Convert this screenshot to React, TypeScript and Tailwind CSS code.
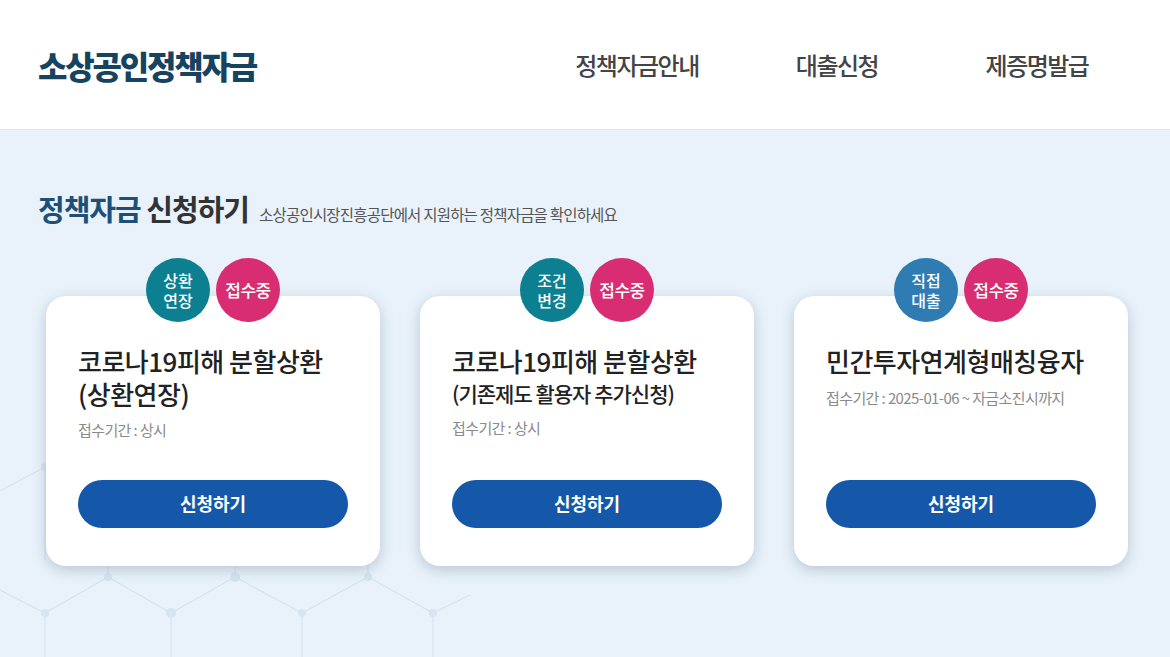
import React from "react";

const font = { fontFamily: '"Noto Sans CJK KR", "Noto Sans", sans-serif' };

type Fund = {
  tag: string[];
  tagColor: string;
  title: string;
  sub?: string;
  subSmall?: boolean;
  period: string;
};

const funds: Fund[] = [
  {
    tag: ["상환", "연장"],
    tagColor: "bg-[#0c7f90]",
    title: "코로나19피해 분할상환",
    sub: "(상환연장)",
    period: "접수기간 : 상시",
  },
  {
    tag: ["조건", "변경"],
    tagColor: "bg-[#0c7f90]",
    title: "코로나19피해 분할상환",
    sub: "(기존제도 활용자 추가신청)",
    subSmall: true,
    period: "접수기간 : 상시",
  },
  {
    tag: ["직접", "대출"],
    tagColor: "bg-[#2f7cb3]",
    title: "민간투자연계형매칭융자",
    period: "접수기간 : 2025-01-06 ~ 자금소진시까지",
  },
];

const HexBackground = () => (
  <svg
    className="pointer-events-none absolute inset-0 h-full w-full"
    viewBox="0 0 1170 527"
    preserveAspectRatio="xMinYMin slice"
  >
    <g stroke="#d6e3ee" strokeWidth="1.2" fill="none">
      <polyline points="0,361 45,337 45,430" />
      <polyline points="0,460 45,483 108,447 171,483 235,447 302,483 368,447 433,483 470,465" />
      <line x1="45" y1="483" x2="45" y2="527" />
      <line x1="171" y1="483" x2="171" y2="527" />
      <line x1="302" y1="483" x2="302" y2="527" />
      <line x1="433" y1="483" x2="433" y2="527" />
      <line x1="108" y1="447" x2="108" y2="420" />
      <line x1="235" y1="447" x2="235" y2="420" />
      <line x1="368" y1="447" x2="368" y2="420" />
    </g>
    <g fill="#d6e5ef">
      <circle cx="45" cy="337" r="4" />
      <circle cx="108" cy="447" r="4" />
      <circle cx="235" cy="447" r="5" />
      <circle cx="368" cy="447" r="4" />
      <circle cx="45" cy="483" r="4" />
      <circle cx="171" cy="483" r="5" />
      <circle cx="302" cy="483" r="4" />
      <circle cx="433" cy="483" r="4" />
    </g>
  </svg>
);

const FundCard = ({ fund }: { fund: Fund }) => (
  <div className="relative flex h-[270px] w-[334px] flex-col rounded-[20px] bg-white px-[32px] pt-[48px] pb-[38px] shadow-[0_4px_14px_rgba(60,90,120,0.28)]">
    <div className="absolute top-[-38px] left-1/2 flex -translate-x-1/2 gap-[6px]">
      <div
        className={`flex h-[64px] w-[64px] items-center justify-center rounded-full ${fund.tagColor} text-center text-[16px] leading-[20px] font-medium text-white`}
      >
        <span>
          {fund.tag[0]}
          <br />
          {fund.tag[1]}
        </span>
      </div>
      <div className="flex h-[64px] w-[64px] items-center justify-center rounded-full bg-[#d82d72] text-[17px] font-medium tracking-[-0.5px] text-white">
        접수중
      </div>
    </div>

    <h3 className="text-[26px] leading-[34px] font-medium tracking-[-0.5px] text-[#222]">
      {fund.title}
    </h3>
    {fund.sub ? (
      <p
        className={
          fund.subSmall
            ? "text-[21px] leading-[30px] font-medium tracking-[-1px] text-[#222]"
            : "text-[26px] leading-[32px] font-medium tracking-[-0.5px] text-[#222]"
        }
      >
        {fund.sub}
      </p>
    ) : null}
    <p className="mt-[10px] text-[15px] leading-[20px] tracking-[-0.6px] text-[#8a8a8a]">
      {fund.period}
    </p>

    <button
      type="button"
      className="mt-auto flex h-[48px] w-full items-center justify-center rounded-full bg-[#1557a8] text-[18px] font-bold text-white"
    >
      신청하기
    </button>
  </div>
);

export default function App() {
  return (
    <div className="flex h-[657px] w-full flex-col overflow-hidden bg-[#e9f2fa]" style={font}>
      <header className="flex h-[130px] shrink-0 items-center justify-between border-b border-[#e2e6ea] bg-white pr-[33px] pl-[38px]">
        <h1 className="text-[32px] font-black tracking-[-2.2px] text-[#16435f]">
          소상공인정책자금
        </h1>
        <nav className="flex">
          {["정책자금안내", "대출신청", "제증명발급"].map((item) => (
            <a
              key={item}
              className="w-[200px] text-center text-[24px] font-medium tracking-[-1.5px] text-[#444]"
            >
              {item}
            </a>
          ))}
        </nav>
      </header>

      <main className="relative flex-1">
        <HexBackground />
        <div className="relative px-[38px] pt-[57px]">
          <div className="flex items-baseline gap-[10px]">
            <h2 className="text-[29px] font-bold tracking-[-1px] text-[#333]">
              <span className="text-[#1d5078]">정책자금</span> 신청하기
            </h2>
            <p className="text-[15.5px] tracking-[-0.8px] text-[#555]">
              소상공인시장진흥공단에서 지원하는 정책자금을 확인하세요
            </p>
          </div>

          <div className="mt-[65px] flex gap-[40px] pl-[8px]">
            {funds.map((fund, i) => (
              <FundCard key={i} fund={fund} />
            ))}
          </div>
        </div>
      </main>
    </div>
  );
}
